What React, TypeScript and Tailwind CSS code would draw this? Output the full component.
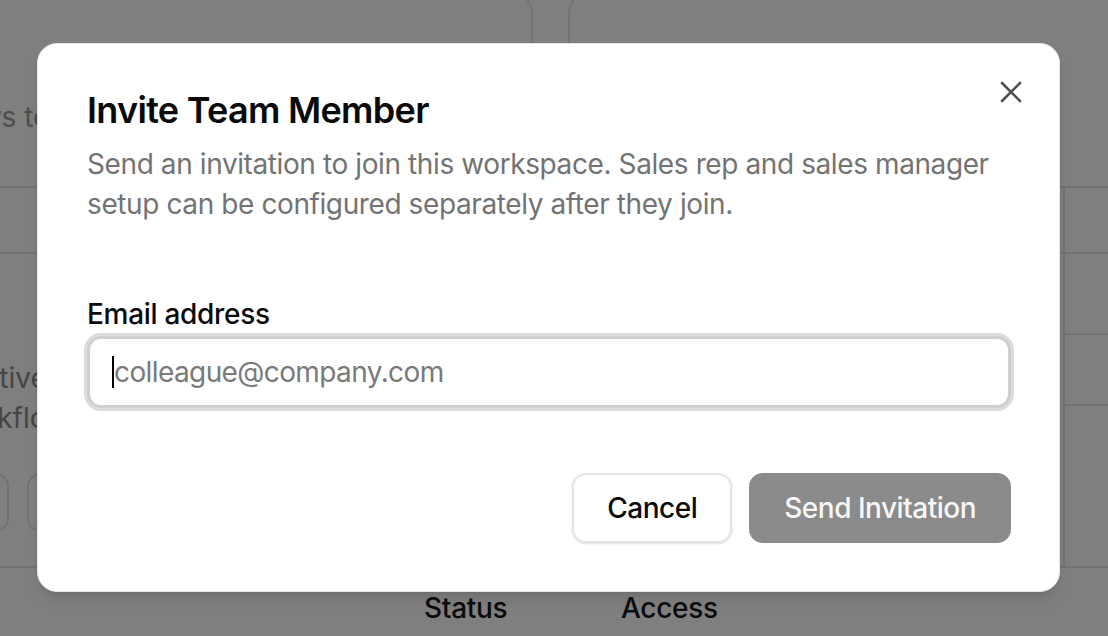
import React from "react";

function CloseIcon() {
  return (
    <svg width="32" height="32" viewBox="0 0 32 32" fill="none" aria-hidden="true">
      <path d="M7 7 L25 25 M25 7 L7 25" stroke="#4f4f4f" strokeWidth="2.6" strokeLinecap="round" />
    </svg>
  );
}

function BackgroundPage() {
  return (
    <div className="flex flex-col">
      {/* top cards */}
      <div className="-mx-[60px] -mt-[10px] flex h-[198px] gap-[35px]">
        <div className="h-full w-[593px] shrink-0 rounded-[24px] border-2 border-[#e5e5e5] pt-[105px]">
          <p className="-ml-[3px] whitespace-nowrap text-[28px] leading-[40px] text-[#9a9a9a]">Users to manage accounts</p>
        </div>
        <div className="h-full w-[600px] shrink-0 rounded-[24px] border-2 border-[#e5e5e5]" />
      </div>
      {/* toolbar row */}
      <div className="flex h-[66px] border-b-2 border-[#e5e5e5]">
        <div className="flex-1" />
        <div className="w-[45px] border-l-2 border-[#e5e5e5]" />
      </div>
      {/* list area */}
      <div className="flex h-[314px] border-b-2 border-[#e5e5e5]">
        <div className="-ml-[60px] flex flex-1 flex-col pl-[24px] pt-[104px]">
          <p className="whitespace-nowrap text-[28px] leading-[40px] text-[#8a8a8a]">Active members</p>
          <p className="-ml-[17px] whitespace-nowrap text-[28px] leading-[40px] text-[#8a8a8a]">workflows</p>
          <div className="mt-[35px] flex gap-[18px]">
            <div className="h-[59px] w-[45px] rounded-[14px] border-2 border-[#e5e5e5]" />
            <div className="h-[59px] w-[140px] rounded-[14px] border-2 border-[#e5e5e5]" />
          </div>
        </div>
        <div className="flex w-[45px] flex-col border-l-2 border-[#e5e5e5]">
          <div className="h-[81px] border-b-2 border-[#e5e5e5]" />
          <div className="h-[71px] border-b-2 border-[#e5e5e5]" />
        </div>
      </div>
      {/* table header */}
      <div className="flex pt-[20px] text-[28px] font-medium leading-[40px] tracking-[-0.3px] text-[#171717]">
        <div className="w-[424px]" />
        <div className="w-[197px]">Status</div>
        <div>Access</div>
      </div>
    </div>
  );
}

export default function App() {
  return (
    <div className="relative h-[636px] w-[1108px] overflow-hidden bg-white font-['Inter',sans-serif]">
      <BackgroundPage />
      <div className="absolute inset-0 bg-black/50" />
      <div
        role="dialog"
        className="absolute left-[37px] top-[43px] flex h-[549px] w-[1023px] flex-col rounded-[20px] border border-[#e5e5e5] bg-white py-[48px] pl-[49px] pr-[48px] shadow-lg"
      >
        <button className="absolute right-[32px] top-[32px] flex h-[32px] w-[32px] items-center justify-center">
          <CloseIcon />
        </button>
        <div className="flex flex-col gap-[16px]">
          <h2 className="text-[36px] font-semibold leading-none tracking-[-0.7px] text-[#0a0a0a]">Invite Team Member</h2>
          <p className="text-[28px] leading-[40px] tracking-[-0.4px] text-[#737373]">
            Send an invitation to join this workspace. Sales rep and sales manager setup can be configured separately after they join.
          </p>
        </div>
        <div className="mt-[76px] flex flex-col gap-[8px]">
          <label className="text-[28px] font-medium leading-none tracking-[-0.3px] text-[#0a0a0a]">Email address</label>
          <div className="flex h-[72px] items-center rounded-[14px] border-[3px] border-[#cfcfcf] bg-white px-[22px] shadow-[0_0_0_3px_#dcdcdc]">
            <span className="h-[32px] w-[2px] bg-black" />
            <span className="text-[28px] tracking-[-0.6px] text-[#7a7a7a]">colleague@company.com</span>
          </div>
        </div>
        <div className="mt-[65px] flex justify-end gap-[17px]">
          <button className="h-[70px] rounded-[14px] border-2 border-[#e5e5e5] bg-white px-[33px] text-[28px] font-medium tracking-[-0.5px] text-[#0a0a0a] shadow-sm">
            Cancel
          </button>
          <button className="h-[70px] rounded-[14px] bg-[#8b8b8b] px-[35px] text-[28px] font-medium tracking-[-0.5px] text-[#f7f7f7]">
            Send Invitation
          </button>
        </div>
      </div>
    </div>
  );
}
